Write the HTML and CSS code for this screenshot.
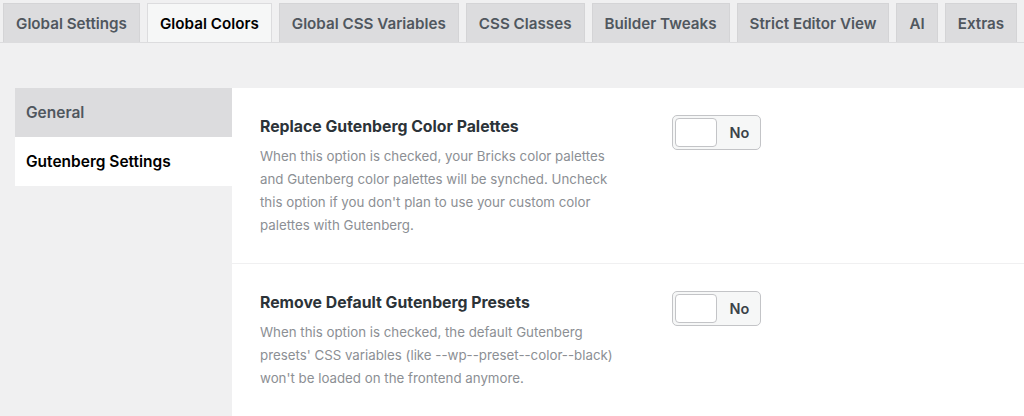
FILE: index.html
```html
<!DOCTYPE html>
<html lang="en">
<head>
<meta charset="utf-8">
<title>Global Colors</title>
<link rel="stylesheet" href="styles.css">
</head>
<body>
<nav class="tabs">
  <a class="tab">Global Settings</a>
  <a class="tab active">Global Colors</a>
  <a class="tab">Global CSS Variables</a>
  <a class="tab">CSS Classes</a>
  <a class="tab">Builder Tweaks</a>
  <a class="tab">Strict Editor View</a>
  <a class="tab">AI</a>
  <a class="tab">Extras</a>
</nav>
<div class="layout">
  <aside class="sidebar">
    <div class="side-item">General</div>
    <div class="side-item current">Gutenberg Settings</div>
  </aside>
  <main class="panel">
    <section class="option">
      <div class="option-text">
        <h3 class="option-title">Replace Gutenberg Color Palettes</h3>
        <p class="option-desc">When this option is checked, your Bricks color palettes and Gutenberg color palettes will be synched. Uncheck this option if you don't plan to use your custom color palettes with Gutenberg.</p>
      </div>
      <div class="toggle"><span class="knob"></span><span class="toggle-label">No</span></div>
    </section>
    <section class="option">
      <div class="option-text">
        <h3 class="option-title">Remove Default Gutenberg Presets</h3>
        <p class="option-desc">When this option is checked, the default Gutenberg presets' CSS variables (like --wp--preset--color--black) won't be loaded on the frontend anymore.</p>
      </div>
      <div class="toggle"><span class="knob"></span><span class="toggle-label">No</span></div>
    </section>
  </main>
</div>
</body>
</html>
```
FILE: styles.css
```css
* { box-sizing: border-box; }
html, body { margin: 0; padding: 0; }
body {
  background: #f0f0f1;
  font-family: Inter, "Liberation Sans", sans-serif;
  color: #1d2327;
  height: 416px;
  overflow: hidden;
}
.tabs {
  display: flex;
  gap: 7px;
  padding: 3px 0 0 3px;
  border-bottom: 1px solid #dcdcde;
  height: 43px;
  white-space: nowrap;
}
.tab {
  display: flex;
  align-items: center;
  height: 39px;
  padding: 0 12px;
  background: #dcdcde;
  border: 1px solid #d4d4d6;
  border-bottom: none;
  color: #50575e;
  font-size: 15.2px;
  font-weight: 600;
}
.tab.active {
  background: #f6f7f7;
  border-color: #dcdcde;
  color: #000;
}
.layout {
  display: flex;
  margin-top: 45px;
  padding-left: 15px;
  height: 330px;
}
.sidebar {
  width: 217px;
  flex: none;
}
.side-item {
  height: 49px;
  display: flex;
  align-items: center;
  padding-left: 11px;
  font-size: 15.5px;
  font-weight: 600;
  background: #dcdcde;
  color: #50575e;
}
.side-item.current {
  background: #fff;
  color: #000;
}
.panel {
  flex: 1;
  background: #fff;
}
.option {
  display: flex;
  padding: 28px 28px 26px;
  border-bottom: 1px solid #f0f0f1;
}
.option-text {
  width: 412px;
  flex: none;
}
.option-title {
  margin: 0 0 7px;
  font-size: 15.8px;
  line-height: 22px;
  font-weight: 700;
  color: #2c3338;
}
.option-desc {
  margin: 0;
  max-width: 365px;
  font-size: 13.3px;
  line-height: 23px;
  color: #8c8f94;
}
.toggle {
  width: 89px;
  height: 35px;
  margin-top: -1px;
  border: 1.5px solid #c3c4c7;
  border-radius: 5px;
  background: #f6f7f7;
  display: flex;
  align-items: center;
  padding: 2px;
}
.knob {
  width: 42px;
  height: 29px;
  background: #fff;
  border: 1.5px solid #c3c4c7;
  border-radius: 4px;
}
.toggle-label {
  flex: 1;
  padding-left: 4px;
  text-align: center;
  font-size: 14.5px;
  font-weight: 600;
  color: #3c434a;
}
```
